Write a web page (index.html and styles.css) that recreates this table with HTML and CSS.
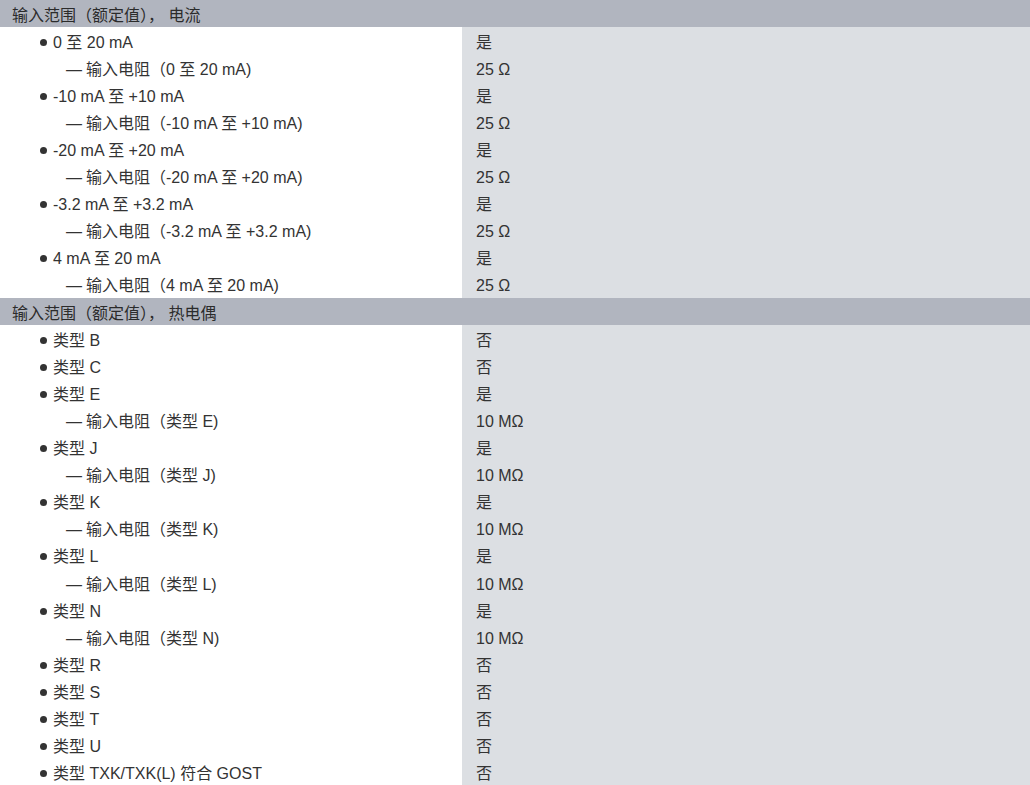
FILE: index.html
```html
<!DOCTYPE html>
<html lang="zh-CN">
<head>
    <meta charset="UTF-8">
    <title>输入范围</title>
    <link rel="stylesheet" href="styles.css">
</head>
<body>
    <table class="spec">
        <tr class="group"><td colspan="2">输入范围（额定值）， 电流</td></tr>
        <tr><td class="item">0 至 20 mA</td><td class="val">是</td></tr>
        <tr><td class="sub">输入电阻（0 至 20 mA)</td><td class="val">25 Ω</td></tr>
        <tr><td class="item">-10 mA 至 +10 mA</td><td class="val">是</td></tr>
        <tr><td class="sub">输入电阻（-10 mA 至 +10 mA)</td><td class="val">25 Ω</td></tr>
        <tr><td class="item">-20 mA 至 +20 mA</td><td class="val">是</td></tr>
        <tr><td class="sub">输入电阻（-20 mA 至 +20 mA)</td><td class="val">25 Ω</td></tr>
        <tr><td class="item">-3.2 mA 至 +3.2 mA</td><td class="val">是</td></tr>
        <tr><td class="sub">输入电阻（-3.2 mA 至 +3.2 mA)</td><td class="val">25 Ω</td></tr>
        <tr><td class="item">4 mA 至 20 mA</td><td class="val">是</td></tr>
        <tr><td class="sub">输入电阻（4 mA 至 20 mA)</td><td class="val">25 Ω</td></tr>

        <tr class="group"><td colspan="2">输入范围（额定值）， 热电偶</td></tr>
        <tr><td class="item">类型 B</td><td class="val">否</td></tr>
        <tr><td class="item">类型 C</td><td class="val">否</td></tr>
        <tr><td class="item">类型 E</td><td class="val">是</td></tr>
        <tr><td class="sub">输入电阻（类型 E)</td><td class="val">10 MΩ</td></tr>
        <tr><td class="item">类型 J</td><td class="val">是</td></tr>
        <tr><td class="sub">输入电阻（类型 J)</td><td class="val">10 MΩ</td></tr>
        <tr><td class="item">类型 K</td><td class="val">是</td></tr>
        <tr><td class="sub">输入电阻（类型 K)</td><td class="val">10 MΩ</td></tr>
        <tr><td class="item">类型 L</td><td class="val">是</td></tr>
        <tr><td class="sub">输入电阻（类型 L)</td><td class="val">10 MΩ</td></tr>
        <tr><td class="item">类型 N</td><td class="val">是</td></tr>
        <tr><td class="sub">输入电阻（类型 N)</td><td class="val">10 MΩ</td></tr>
        <tr><td class="item">类型 R</td><td class="val">否</td></tr>
        <tr><td class="item">类型 S</td><td class="val">否</td></tr>
        <tr><td class="item">类型 T</td><td class="val">否</td></tr>
        <tr><td class="item">类型 U</td><td class="val">否</td></tr>
        <tr><td class="item">类型 TXK/TXK(L) 符合 GOST</td><td class="val">否</td></tr>
    </table>
</body>
</html>
```
FILE: styles.css
```css
* {
    margin: 0;
    padding: 0;
    box-sizing: border-box;
}

body {
    font-family: 'Liberation Sans', 'Noto Sans CJK SC', sans-serif;
    font-size: 16px;
    color: #333;
    background: white;
}

.spec {
    width: 100%;
    border-collapse: collapse;
}

.spec td {
    height: 27.1px;
    padding: 4px 0 0 0;
    vertical-align: middle;
    line-height: 18px;
    white-space: nowrap;
}

.group td {
    background: #b1b5bf;
    padding-left: 12px;
    color: #2b2b2b;
}

.item {
    width: 462px;
    padding-left: 40px !important;
}

.item::before {
    content: "";
    display: inline-block;
    width: 7px;
    height: 7px;
    border-radius: 50%;
    background: #333;
    margin-right: 6px;
    vertical-align: 2px;
}

.sub {
    width: 462px;
    padding-left: 66px !important;
}

.sub::before {
    content: "—";
    margin-right: 4px;
}

.val {
    background: #dcdfe3;
    padding-left: 14px !important;
}
```
